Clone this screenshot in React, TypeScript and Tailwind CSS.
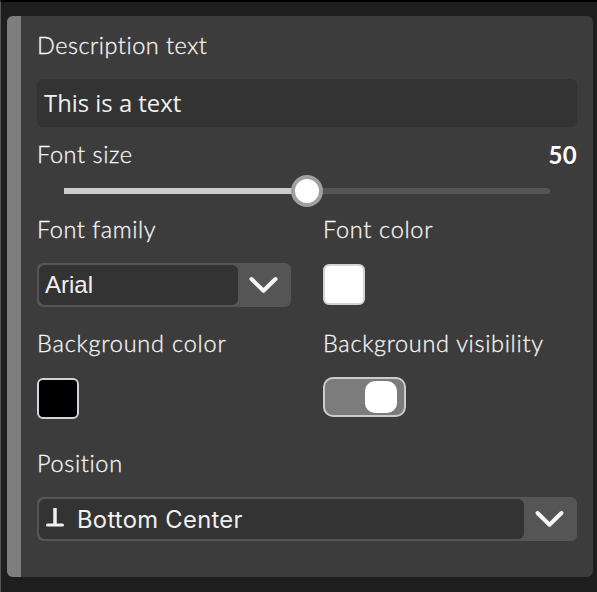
import React from "react";

type LabelProps = { children: React.ReactNode; className?: string };

function Label({ children, className = "" }: LabelProps) {
  return (
    <div
      className={`h-[30px] whitespace-nowrap font-['Lato',sans-serif] text-[23.5px] leading-[28px] font-light text-[#f5f5f5] [-webkit-text-stroke:0.3px_#f5f5f5] ${className}`}
    >
      {children}
    </div>
  );
}

function Select({ children, className = "" }: LabelProps) {
  return (
    <button
      type="button"
      className={`flex h-[44px] items-stretch rounded-[6px] bg-[#555555] p-[2px] text-left text-[#f0f0f0] ${className}`}
    >
      <span className="flex flex-1 items-center rounded-[6px] bg-[#333333] px-[6px]">{children}</span>
      <span className="flex w-[51px] items-center justify-center">
        <svg width="32" height="22" viewBox="0 0 32 22" fill="none" className="text-[#f5f5f5]">
          <path d="M3.5 5L15.5 16.8L27.5 5" stroke="currentColor" strokeWidth="4" strokeLinecap="round" strokeLinejoin="round" />
        </svg>
      </span>
    </button>
  );
}

export default function App() {
  return (
    <div className="h-[592px] w-[597px] overflow-hidden border-t-2 border-l border-t-black border-l-[#555555] bg-[#1e1e1e] pt-[14px] pl-[6px]">
      <div className="flex h-[561px] w-[586px] overflow-hidden rounded-[6px] bg-[#3c3c3c]">
        <div className="w-[14px] shrink-0 bg-[#7e7e7e]" />
        <div className="flex flex-1 flex-col px-4 pt-[15px]">
          <Label className="tracking-[0.5px]">Description text</Label>
          <div className="mt-[18px] flex h-[48px] items-center rounded-[6px] bg-[#333333] px-[7px] pt-[1px] font-['Open_Sans',sans-serif] text-[23.85px] text-[#f0f0f0]">
            This is a text
          </div>
          <div className="mt-[13px] flex justify-between">
            <Label className="tracking-[0.6px]">Font size</Label>
            <div className="font-['Lato',sans-serif] text-[24px] leading-[30px] font-bold tracking-[0.3px] text-white">50</div>
          </div>
          <div className="mx-[27px] mt-[5px] flex h-[32px] items-center">
            <div className="h-[6px] flex-1 bg-[#cccccc]" />
            <div className="z-10 -mx-4 size-[32px] shrink-0 rounded-full border-4 border-[#a0a0a0] bg-white" />
            <div className="h-[6px] flex-1 rounded-r-full bg-[#555555]" />
          </div>
          <div className="mt-[8px] grid grid-cols-[254px_1fr] gap-x-[32px]">
            <div>
              <Label className="tracking-[0.55px]">Font family</Label>
              <Select className="mt-[18px] w-[254px]">
                <span className="font-['Liberation_Sans',sans-serif] text-[24px] leading-[40px]">Arial</span>
              </Select>
            </div>
            <div>
              <Label className="tracking-[0.7px]">Font color</Label>
              <div className="mt-[19px] h-[41px] w-[42px] rounded-[6px] border-2 border-[#ced4da] bg-white" />
            </div>
          </div>
          <div className="mt-[22px] grid grid-cols-[254px_1fr] gap-x-[32px]">
            <div>
              <Label className="tracking-[0.8px]">Background color</Label>
              <div className="mt-[19px] h-[41px] w-[42px] rounded-[6px] border-2 border-[#ced4da] bg-black" />
            </div>
            <div>
              <Label className="tracking-[0.68px]">Background visibility</Label>
              <div className="mt-[18px] flex h-[40px] w-[83px] items-center justify-end rounded-[10px] border-2 border-[#cccccc] bg-[#7c7c7c] pr-[7px]">
                <div className="size-[32px] rounded-[10px] bg-white" />
              </div>
            </div>
          </div>
          <Label className="mt-[30px] tracking-[0.65px]">Position</Label>
          <Select className="mt-[18px] w-full">
            <svg width="20" height="22" viewBox="0 0 20 22" fill="none" className="mr-[12px]">
              <path d="M10 0V17" stroke="currentColor" strokeWidth="3.5" />
              <path d="M2.5 17H17.5" stroke="currentColor" strokeWidth="3" strokeLinecap="round" />
            </svg>
            <span className="pt-[2px] font-['Inter',sans-serif] text-[23.75px] leading-[38px] tracking-[0.3px]">Bottom Center</span>
          </Select>
        </div>
      </div>
    </div>
  );
}
